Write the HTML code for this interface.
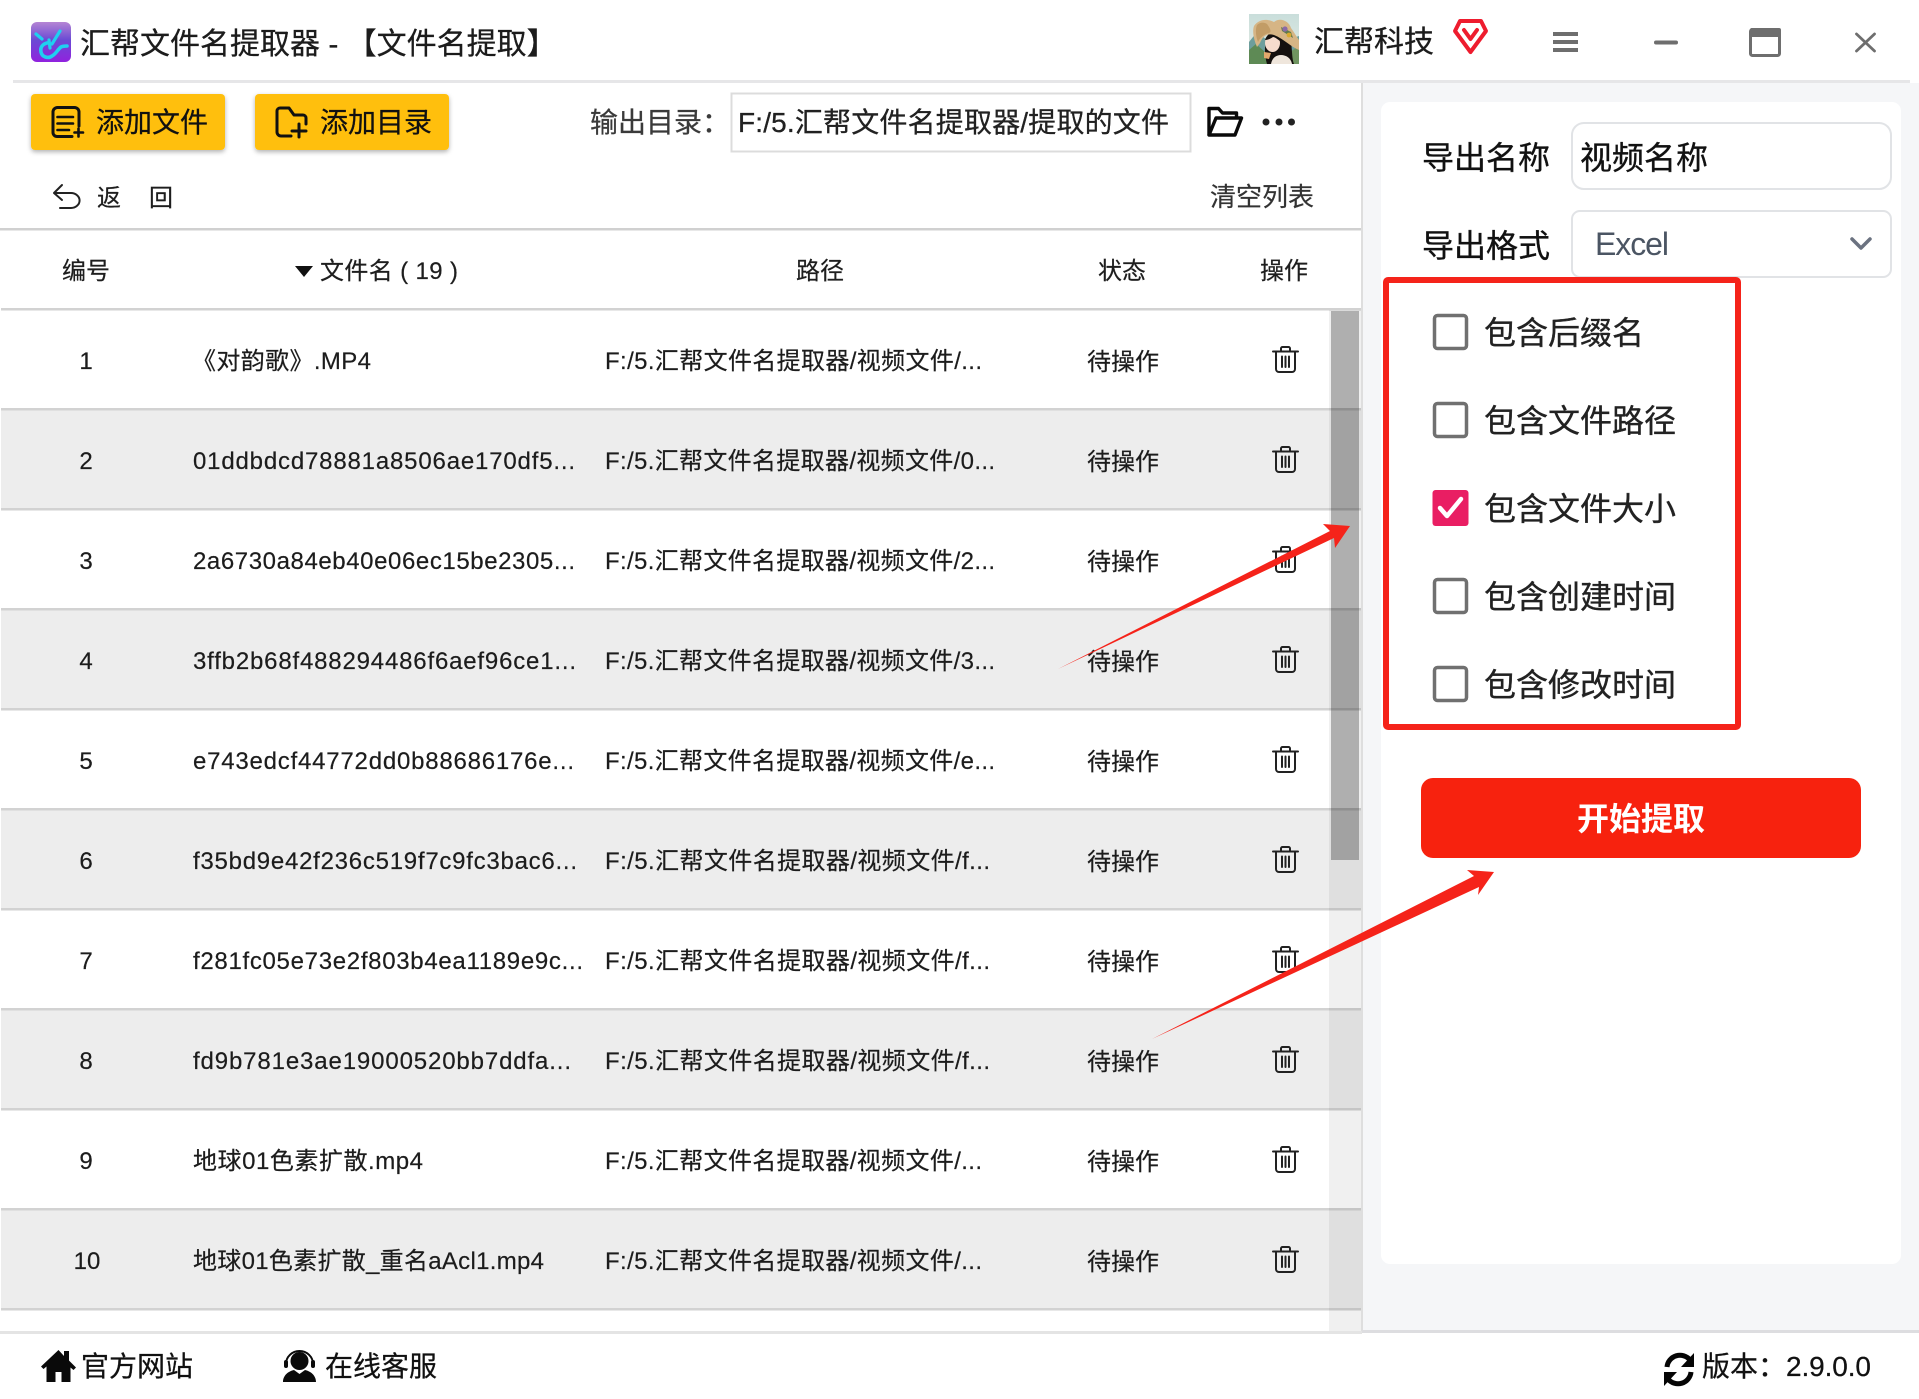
<!DOCTYPE html>
<html lang="zh">
<head>
<meta charset="utf-8">
<title>汇帮文件名提取器</title>
<style>
html,body{margin:0;padding:0;background:#fff;width:1919px;height:1399px;overflow:hidden}
svg{display:block}
text{font-family:"Liberation Sans","Noto Sans CJK SC",sans-serif;fill:#1c1c1c}
.t24{font-size:24px;fill:#1e1e1e;stroke:#1e1e1e;stroke-width:.2px}
.t28{font-size:28px;stroke:#111;stroke-width:.25px}
.t32{font-size:32px;stroke:#111;stroke-width:.35px}
.ic{fill:none;stroke:#111;stroke-linecap:round;stroke-linejoin:round}
</style>
</head>
<body>
<svg xmlns="http://www.w3.org/2000/svg" width="1919" height="1399" viewBox="0 0 1919 1399">
<defs>
<linearGradient id="app" x1="0" y1="0" x2="0" y2="1"><stop offset="0" stop-color="#b585d4"/><stop offset=".45" stop-color="#6a4ad4"/><stop offset="1" stop-color="#9122de"/></linearGradient>
<linearGradient id="sky" x1="0" y1="0" x2="0" y2="1"><stop offset="0" stop-color="#c9dedb"/><stop offset="1" stop-color="#e6ece4"/></linearGradient>
<filter id="sh" x="-10%" y="-20%" width="120%" height="150%"><feDropShadow dx="0" dy="2" stdDeviation="2.5" flood-color="#000" flood-opacity=".3"/></filter>
<g id="trash" fill="none" stroke="#222" stroke-width="2" stroke-linecap="round" stroke-linejoin="round">
<path d="M1 5.500H26"/>
<path d="M9 5V2.500A1.500 1.500 0 0 1 10.500 1h6A1.500 1.500 0 0 1 18 2.500V5"/>
<path d="M4 6V23a3 3 0 0 0 3 3H20a3 3 0 0 0 3-3V6"/>
<path d="M10 10.500V21M13.500 10.500V21M17 10.500V21"/>
</g>
<clipPath id="av"><rect x="1249" y="14" width="50" height="50"/></clipPath>
</defs>

<rect width="1919" height="1399" fill="#fff"/>

<!-- title bar -->
<rect x="31" y="22" width="40" height="40" rx="6" fill="url(#app)"/>
<path d="M36 34l6 5M60 31l-8 13M49 40l1 8" fill="none" stroke="#1fd0f0" stroke-width="3.200" stroke-linecap="round"/>
<path d="M47 43c-4 1-7 4-6 9 1 5 7 7 11 4 4-2 6-7 9-9 2-1 4-1 6-1" fill="none" stroke="#1fd0f0" stroke-width="3.600" stroke-linecap="round" stroke-linejoin="round"/>
<text x="80" y="54" font-size="30" fill="#111" style="stroke:#111;stroke-width:.25px">汇帮文件名提取器 - 【文件名提取】</text>

<!-- avatar -->
<g clip-path="url(#av)">
<rect x="1249" y="14" width="50" height="50" fill="url(#sky)"/>
<path d="M1249 42l8-10 10 8 14 2 18-6v28h-50z" fill="#6d9e9c"/>
<path d="M1249 50l7-6 9 8 6 12h-22z" fill="#5e8a55"/>
<path d="M1290 52l9-6v18h-10z" fill="#6f9460"/>
<path d="M1267 64c-3-10-3-22 2-30 6-6 16-5 20 2 4 8 2 20 5 28z" fill="#15110f"/>
<path d="M1271 64c1-6 5-9 10-9s10 3 11 9z" fill="#efe6dc"/>
<ellipse cx="1272.500" cy="43" rx="7.500" ry="9" fill="#f6dccd"/>
<path d="M1265 40c2-6 7-9 13-8 2 2 3 5 2 9-3-2-5-4-7-4-3 2-5 3-8 3z" fill="#15110f"/>
<path d="M1264 52l7 1-2 6-5-1z" fill="#e3a86c"/>
<path d="M1254 26c4-6 12-8 20-4 6-5 15-1 17 6 3 4 5 8 8 12v10c-8-3-15-11-25-15-7-2-11 1-14 8l-3 4c-3-7-5-15-3-21z" fill="#d6b585"/>
<path d="M1257 25c3-3 7-3 10-1 3 4 5 8 2 9-5 1-9 5-11 9-2-5-3-12-1-17z" fill="#c29c66"/>
<path d="M1281 27l10 5 2 6-11-7z" fill="#5f7a4d"/>
<circle cx="1285" cy="29" r="2.600" fill="#8a6aa8"/>
<circle cx="1289" cy="35" r="2.400" fill="#d9a92e"/>
</g>
<text x="1314" y="52" font-size="30" fill="#111" style="stroke:#111;stroke-width:.25px">汇帮科技</text>
<path d="M1460 21h21l5 10-15.500 21L1455 31z" fill="none" stroke="#ee1c2e" stroke-width="4" stroke-linejoin="round"/>
<path d="M1464 30l6.500 9 6.500-9" fill="none" stroke="#ee1c2e" stroke-width="4" stroke-linecap="round" stroke-linejoin="round"/>

<!-- window controls -->
<g fill="#6e6e6e">
<rect x="1553" y="32" width="25" height="4"/><rect x="1553" y="40" width="25" height="4"/><rect x="1553" y="48" width="25" height="4"/>
<rect x="1654" y="40.500" width="24" height="4" rx="2"/>
</g>
<rect x="1750.500" y="29.500" width="29" height="26" rx="2" fill="#fff" stroke="#6e6e6e" stroke-width="3"/>
<rect x="1750" y="28" width="31" height="9" rx="2" fill="#6e6e6e"/>
<path d="M1856.500 34l18 17M1874.500 34l-18 17" stroke="#6e6e6e" stroke-width="2.800" fill="none" stroke-linecap="round"/>

<!-- right panel bg -->
<rect x="1362" y="83" width="557" height="1248" fill="#f5f6f8"/>
<rect x="1361" y="83" width="2" height="1250" fill="#dedede"/>
<rect x="13" y="80" width="1897" height="3" fill="#e6e6e8"/>
<rect x="1381" y="102" width="520" height="1162" rx="9" fill="#fff"/>

<!-- toolbar -->
<rect x="31" y="94" width="194" height="56" rx="4" fill="#ffbf0b" filter="url(#sh)"/>
<rect x="255" y="94" width="194" height="56" rx="4" fill="#ffbf0b" filter="url(#sh)"/>
<g class="ic" stroke-width="3">
<path d="M79 126V112a4.500 4.500 0 0 0-4.500-4.500H57.500A4.500 4.500 0 0 0 53 112v20.500a4 4 0 0 0 4 4H72"/>
<path d="M57.500 117H73M57.500 123.500H73M57.500 130H69" stroke-width="2.600"/>
<path d="M74.500 132.500H83M78.500 128.500V136.500" stroke-width="2.600"/>
<path d="M291 136H281a4 4 0 0 1-4-4V111a3 3 0 0 1 3-3h9l5 7h9a3 3 0 0 1 3 3v6"/>
<path d="M292 131H306M299 124V137" stroke-width="3"/>
</g>
<text x="96" y="132" class="t28" style="fill:#111">添加文件</text>
<text x="320" y="132" class="t28" style="fill:#111">添加目录</text>
<text x="590" y="132" class="t28" style="fill:#3a3a3a;stroke:#3a3a3a">输出目录：</text>
<rect x="731.500" y="93.500" width="459" height="58" fill="#fff" stroke="#dcdcdc" stroke-width="2"/>
<text x="738" y="132" class="t28" textLength="431" style="fill:#222">F:/5.汇帮文件名提取器/提取的文件</text>
<g fill="none" stroke="#0a0a0a" stroke-width="3.400" stroke-linejoin="round">
<path d="M1209 135V108.500h9.500l4 4.500h14v5"/>
<path d="M1209 135h26l6.500-17H1216z"/>
</g>
<g fill="#222"><circle cx="1266" cy="122" r="3.500"/><circle cx="1279" cy="122" r="3.500"/><circle cx="1291.500" cy="122" r="3.500"/></g>

<path d="M62 185l-8 8 8 7M54 193H71a8 7 0 0 1 0 15H60" fill="none" stroke="#222" stroke-width="2" stroke-linecap="round" stroke-linejoin="round"/>
<text x="97" y="206" class="t24">返</text>
<text x="149" y="206" class="t24">回</text>
<text x="1210" y="206" font-size="26" style="fill:#333;stroke:#333;stroke-width:.2px">清空列表</text>
<rect x="0" y="228" width="1361" height="2.500" fill="#d0d0d0"/>

<!-- table header -->
<text x="62" y="279" class="t24">编号</text>
<path d="M295 266H313L304 277z" fill="#111"/>
<text x="320" y="279" class="t24" textLength="138">文件名 ( 19 )</text>
<text x="796" y="279" class="t24">路径</text>
<text x="1098" y="279" class="t24">状态</text>
<text x="1260" y="279" class="t24">操作</text>

<!-- row backgrounds -->
<g fill="#ededed">
<rect x="1" y="409" width="1360" height="100"/>
<rect x="1" y="609" width="1360" height="100"/>
<rect x="1" y="809" width="1360" height="100"/>
<rect x="1" y="1009" width="1360" height="100"/>
<rect x="1" y="1209" width="1360" height="100"/>
</g>
<g fill="#d2d2d2">
<rect x="1" y="308" width="1360" height="2.500"/>
<rect x="1" y="408" width="1360" height="2.500"/>
<rect x="1" y="508" width="1360" height="2.500"/>
<rect x="1" y="608" width="1360" height="2.500"/>
<rect x="1" y="708" width="1360" height="2.500"/>
<rect x="1" y="808" width="1360" height="2.500"/>
<rect x="1" y="908" width="1360" height="2.500"/>
<rect x="1" y="1008" width="1360" height="2.500"/>
<rect x="1" y="1108" width="1360" height="2.500"/>
<rect x="1" y="1208" width="1360" height="2.500"/>
<rect x="1" y="1308" width="1360" height="2.500"/>
</g>

<!-- rows -->
<g class="t24" text-anchor="middle">
<text x="86" y="369">1</text><text x="86" y="469">2</text><text x="86" y="569">3</text><text x="86" y="669">4</text><text x="86" y="769">5</text>
<text x="86" y="869">6</text><text x="86" y="969">7</text><text x="86" y="1069">8</text><text x="86" y="1169">9</text><text x="87" y="1269">10</text>
</g>
<g class="t24">
<text x="192" y="369" textLength="179">《对韵歌》.MP4</text>
<text x="193" y="469" textLength="382">01ddbdcd78881a8506ae170df5...</text>
<text x="193" y="569" textLength="382">2a6730a84eb40e06ec15be2305...</text>
<text x="193" y="669" textLength="383">3ffb2b68f488294486f6aef96ce1...</text>
<text x="193" y="769" textLength="381">e743edcf44772dd0b88686176e...</text>
<text x="193" y="869" textLength="384">f35bd9e42f236c519f7c9fc3bac6...</text>
<text x="193" y="969" textLength="390">f281fc05e73e2f803b4ea1189e9c...</text>
<text x="193" y="1069" textLength="378">fd9b781e3ae19000520bb7ddfa...</text>
<text x="193" y="1169" textLength="230">地球01色素扩散.mp4</text>
<text x="193" y="1269" textLength="351">地球01色素扩散_重名aAcl1.mp4</text>
</g>
<g class="t24">
<text x="605" y="369" textLength="377">F:/5.汇帮文件名提取器/视频文件/...</text>
<text x="605" y="469" textLength="390">F:/5.汇帮文件名提取器/视频文件/0...</text>
<text x="605" y="569" textLength="390">F:/5.汇帮文件名提取器/视频文件/2...</text>
<text x="605" y="669" textLength="390">F:/5.汇帮文件名提取器/视频文件/3...</text>
<text x="605" y="769" textLength="390">F:/5.汇帮文件名提取器/视频文件/e...</text>
<text x="605" y="869" textLength="385">F:/5.汇帮文件名提取器/视频文件/f...</text>
<text x="605" y="969" textLength="385">F:/5.汇帮文件名提取器/视频文件/f...</text>
<text x="605" y="1069" textLength="385">F:/5.汇帮文件名提取器/视频文件/f...</text>
<text x="605" y="1169" textLength="377">F:/5.汇帮文件名提取器/视频文件/...</text>
<text x="605" y="1269" textLength="377">F:/5.汇帮文件名提取器/视频文件/...</text>
</g>
<g class="t24">
<text x="1087" y="370">待操作</text><text x="1087" y="470">待操作</text><text x="1087" y="570">待操作</text><text x="1087" y="670">待操作</text><text x="1087" y="770">待操作</text>
<text x="1087" y="870">待操作</text><text x="1087" y="970">待操作</text><text x="1087" y="1070">待操作</text><text x="1087" y="1170">待操作</text><text x="1087" y="1270">待操作</text>
</g>
<use href="#trash" x="1272" y="346"/><use href="#trash" x="1272" y="446"/><use href="#trash" x="1272" y="546"/><use href="#trash" x="1272" y="646"/><use href="#trash" x="1272" y="746"/>
<use href="#trash" x="1272" y="846"/><use href="#trash" x="1272" y="946"/><use href="#trash" x="1272" y="1046"/><use href="#trash" x="1272" y="1146"/><use href="#trash" x="1272" y="1246"/>

<!-- scrollbar -->
<rect x="1329" y="310" width="32" height="1023" fill="#000" opacity=".06"/>
<rect x="1331" y="311" width="28" height="549" fill="#000" opacity=".27"/>

<!-- right form -->
<text x="1422" y="169" class="t32" style="fill:#111">导出名称</text>
<rect x="1572" y="123" width="319" height="66" rx="12" fill="#fff" stroke="#e1e3e6" stroke-width="2"/>
<text x="1580" y="169" class="t32" style="fill:#111">视频名称</text>
<text x="1422" y="257" class="t32" style="fill:#111">导出格式</text>
<rect x="1572" y="211" width="319" height="66" rx="8" fill="#fff" stroke="#e1e3e6" stroke-width="2"/>
<text x="1595" y="255" class="t32" textLength="74" style="fill:#4b5563;stroke:none">Excel</text>
<path d="M1852 239l9 9 9-9" fill="none" stroke="#6b7280" stroke-width="3.500" stroke-linecap="round" stroke-linejoin="round"/>

<!-- options -->
<rect x="1386" y="280" width="352" height="447" rx="2" fill="#fff" stroke="#f5231a" stroke-width="6"/>
<g fill="#fff" stroke="#707070" stroke-width="3.500">
<rect x="1434.500" y="315.500" width="32" height="33" rx="3"/>
<rect x="1434.500" y="403.500" width="32" height="33" rx="3"/>
<rect x="1434.500" y="579.500" width="32" height="33" rx="3"/>
<rect x="1434.500" y="667.500" width="32" height="33" rx="3"/>
</g>
<rect x="1432.500" y="490" width="36" height="36" rx="3" fill="#e91e63"/>
<path d="M1440 508l7 8 14-17" fill="none" stroke="#fff" stroke-width="4.500" stroke-linecap="round" stroke-linejoin="round"/>
<g>
<text x="1484" y="344" class="t32" style="fill:#222;stroke:#222">包含后缀名</text>
<text x="1484" y="432" class="t32" style="fill:#222;stroke:#222">包含文件路径</text>
<text x="1484" y="520" class="t32" style="fill:#222;stroke:#222">包含文件大小</text>
<text x="1484" y="608" class="t32" style="fill:#222;stroke:#222">包含创建时间</text>
<text x="1484" y="696" class="t32" style="fill:#222;stroke:#222">包含修改时间</text>
</g>

<!-- start button -->
<rect x="1421" y="778" width="440" height="80" rx="12" fill="#f7220e"/>
<text x="1641" y="830" font-size="32" font-weight="700" text-anchor="middle" style="fill:#fff">开始提取</text>

<!-- footer -->
<rect x="0" y="1331" width="1362" height="3" fill="#e4e4e4"/>
<rect x="1362" y="1330" width="557" height="3" fill="#dddde0"/>
<path d="M58.500 1350L41 1366.500l2.500 2.500 3-2.500V1382h9v-10h6v10h9v-14.500l3 2.500 2.500-2.500-7-7V1351h-5v5z" fill="#0a0a0a"/>
<text x="81" y="1376" class="t28" style="fill:#111">官方网站</text>
<g fill="#0a0a0a">
<circle cx="299.500" cy="1361" r="9"/>
<path d="M283 1382c0-7 6-11 11-12l5.500 4 5.500-4c5 1 11 5 11 12z"/>
<path d="M286 1364a13.500 13 0 0 1 27 0" fill="none" stroke="#0a0a0a" stroke-width="2"/>
<rect x="284" y="1360" width="4" height="8" rx="2"/><rect x="311" y="1360" width="4" height="8" rx="2"/>
</g>
<text x="325" y="1376" class="t28" style="fill:#111">在线客服</text>
<g fill="none" stroke="#050505" stroke-width="5">
<path d="M1667 1367a13 13 0 0 1 23-7"/>
<path d="M1691 1372a13 13 0 0 1-23 7"/>
</g>
<path d="M1694 1353v14h-13zM1664 1386v-14h13z" fill="#050505"/>
<text x="1702" y="1376" class="t28" style="fill:#111">版本：</text>
<text x="1786" y="1376" class="t28" textLength="85" style="fill:#111">2.9.0.0</text>

<!-- annotation arrows -->
<path d="M1058 669L1330 531 1323 524 1350 526 1335 548 1334 538z" fill="#f5231a"/>
<path d="M1152 1039L1474 876 1467 870 1494 872 1478 895 1479 887z" fill="#f5231a"/>
</svg>
</body>
</html>
